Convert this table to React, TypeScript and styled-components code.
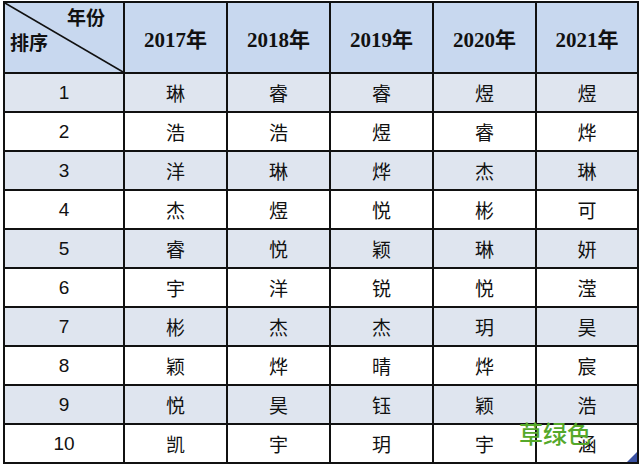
import styled, { createGlobalStyle } from 'styled-components'

const GlobalStyle = createGlobalStyle`
    html, body {
        margin: 0;
        padding: 0;
        background: #ffffff;
    }
`

const Page = styled('div')`
    position: relative;
    width: 640px;
    height: 467px;
    padding: 1px 0 0 3px;
    box-sizing: border-box;
    overflow: hidden;
`

const Table = styled('table')`
    border-collapse: collapse;
    table-layout: fixed;
    width: 634px;
    font-family: "Liberation Sans", "Noto Sans CJK SC", sans-serif;
    color: #111111;
`

const HeadCell = styled('th')`
    height: 69px;
    padding: 0;
    background: #c8d8ef;
    border: 2px solid #111111;
    font-family: "Liberation Serif", "Noto Sans CJK SC", serif;
    font-size: 21px;
    font-weight: 700;
    text-align: center;
    vertical-align: middle;
`

const CornerCell = styled(HeadCell)`
    position: relative;
    font-family: "Noto Sans CJK SC", sans-serif;
    font-size: 19px;
`

const Diagonal = styled('svg')`
    position: absolute;
    inset: 0;
    width: 100%;
    height: 100%;
`

const CornerLabels = styled('div')`
    position: relative;
    height: 69px;
    display: flex;
    flex-direction: column;
    justify-content: space-between;
    padding: 2px 18px 18px 5px;
    box-sizing: border-box;
    line-height: 24px;
`

const TopLabel = styled('span')`
    align-self: flex-end;
`

const BottomLabel = styled('span')`
    align-self: flex-start;
`

const Row = styled('tr')<{ $shaded: boolean }>`
    background: ${p => (p.$shaded ? '#dfe5ef' : '#ffffff')};
`

const Cell = styled('td')`
    height: 37px;
    padding: 0;
    border: 2px solid #111111;
    text-align: center;
    vertical-align: middle;
    font-size: 19px;
`

const Watermark = styled('div')`
    position: absolute;
    left: 519px;
    top: 415px;
    font-family: "Noto Sans CJK SC", sans-serif;
    font-size: 24px;
    font-weight: 500;
    color: #55a82a;
`

const Corner = styled('div')`
    position: absolute;
    left: 627px;
    top: 452px;
    width: 0;
    height: 0;
    border-left: 10px solid transparent;
    border-bottom: 10px solid #3b52a3;
`

const years = ['2017年', '2018年', '2019年', '2020年', '2021年']

const rows = [
    ['琳', '睿', '睿', '煜', '煜'],
    ['浩', '浩', '煜', '睿', '烨'],
    ['洋', '琳', '烨', '杰', '琳'],
    ['杰', '煜', '悦', '彬', '可'],
    ['睿', '悦', '颖', '琳', '妍'],
    ['宇', '洋', '锐', '悦', '滢'],
    ['彬', '杰', '杰', '玥', '昊'],
    ['颖', '烨', '晴', '烨', '宸'],
    ['悦', '昊', '钰', '颖', '浩'],
    ['凯', '宇', '玥', '宇', '涵'],
]

export default function App() {
    return (
        <Page>
            <GlobalStyle />
            <Table>
                <colgroup>
                    <col style={{ width: 120 }} />
                    <col style={{ width: 103 }} />
                    <col style={{ width: 103 }} />
                    <col style={{ width: 103 }} />
                    <col style={{ width: 103 }} />
                    <col style={{ width: 102 }} />
                </colgroup>
                <thead>
                    <tr>
                        <CornerCell>
                            <Diagonal viewBox="0 0 100 100" preserveAspectRatio="none">
                                <line x1="0" y1="0" x2="100" y2="100" stroke="#111111" strokeWidth="1.6" vectorEffect="non-scaling-stroke" />
                            </Diagonal>
                            <CornerLabels>
                                <TopLabel>年份</TopLabel>
                                <BottomLabel>排序</BottomLabel>
                            </CornerLabels>
                        </CornerCell>
                        {years.map(y => (
                            <HeadCell key={y}>{y}</HeadCell>
                        ))}
                    </tr>
                </thead>
                <tbody>
                    {rows.map((names, i) => (
                        <Row key={i} $shaded={i % 2 === 0}>
                            <Cell>{i + 1}</Cell>
                            {names.map((n, j) => (
                                <Cell key={j}>{n}</Cell>
                            ))}
                        </Row>
                    ))}
                </tbody>
            </Table>
            <Watermark>草绿色</Watermark>
            <Corner />
        </Page>
    )
}
